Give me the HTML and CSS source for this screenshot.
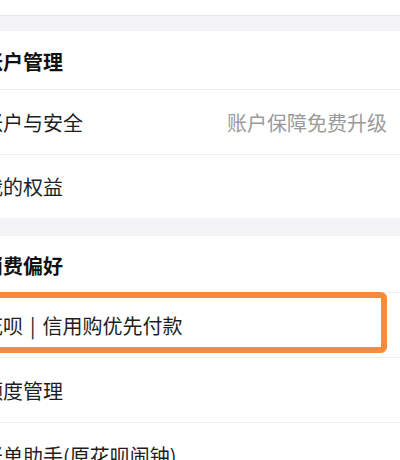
FILE: index.html
```html
<!DOCTYPE html>
<html lang="zh-CN">
<head>
<meta charset="utf-8">
<link rel="stylesheet" href="styles.css">
</head>
<body>
<div class="page">
  <div class="top"></div>
  <div class="band band-first"></div>
  <section class="group">
    <div class="head">账户管理</div>
    <div class="row"><span class="label">账户与安全</span><span class="value">账户保障免费升级</span></div>
    <div class="row row-last"><span class="label">我的权益</span></div>
  </section>
  <div class="band"></div>
  <section class="group">
    <div class="head head-2">消费偏好</div>
    <div class="row highlight"><span class="label">花呗<span class="sep">|</span>信用购优先付款</span></div>
    <div class="row"><span class="label">额度管理</span></div>
    <div class="row"><span class="label">账单助手(原花呗闹钟)</span></div>
  </section>
</div>
</body>
</html>
```
FILE: styles.css
```css
* { box-sizing: border-box; }
html, body { margin: 0; padding: 0; background: #ffffff; overflow: hidden; }
body {
  font-family: "Noto Sans CJK SC", "Noto Sans", sans-serif;
  color: #1c1c1c;
  width: 400px;
  height: 460px;
}
.page { margin-left: -17px; width: 417px; }
.top { height: 15px; background: #ffffff; }
.band { height: 18px; background: #f4f4f6; }
.band-first { height: 16px; background: #f4f3f8; border-top: 1px solid #e9e8ee; }
.group { background: #ffffff; }
.head {
  height: 59px;
  display: flex;
  align-items: center;
  font-size: 20px;
  font-weight: 700;
  color: #111111;
  border-bottom: 1px solid #ececec;
  padding-top: 3px;
}
.head-2 { height: 57px; }
.row {
  position: relative;
  height: 65px;
  display: flex;
  align-items: center;
  justify-content: space-between;
  padding-right: 13px;
  border-bottom: 1px solid #efefef;
  font-size: 20px;
}
.row-last { height: 63px; border-bottom: none; }
.label { color: #1e1e1e; white-space: nowrap; }
.sep { margin: 0 7px; }
.value { color: #9a9a9a; white-space: nowrap; }
.highlight::after {
  content: "";
  position: absolute;
  left: -20px;
  right: 13px;
  top: -1px;
  bottom: 4px;
  border: 6px solid #f98a3c;
  border-radius: 6px;
}
```
